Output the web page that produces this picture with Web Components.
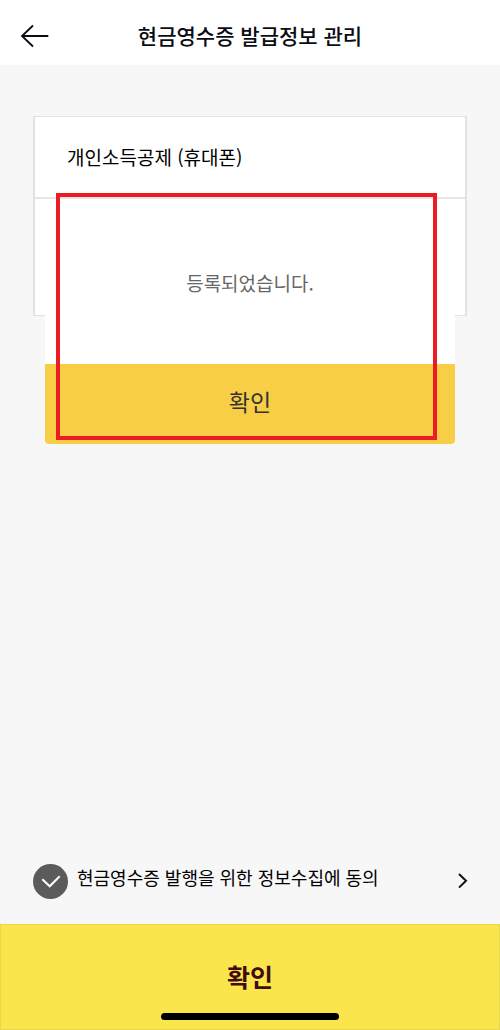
<!DOCTYPE html>
<html lang="ko">
<head>
<meta charset="utf-8">
<meta name="viewport" content="width=device-width, initial-scale=1">
<title>현금영수증 발급정보 관리</title>
<style>
body { margin: 0; background: #f7f7f7; color: #000; font-family: "Noto Sans CJK KR", sans-serif; }
</style>
</head>
<body>
<receipt-page>
  <top-bar slot="header">현금영수증 발급정보 관리</top-bar>
  <info-card>개인소득공제 (휴대폰)</info-card>
  <alert-dialog slot="overlay" action="확인">등록되었습니다.</alert-dialog>
  <focus-frame slot="overlay"></focus-frame>
  <consent-row slot="footer">현금영수증 발행을 위한 정보수집에 동의</consent-row>
  <submit-bar slot="footer">확인</submit-bar>
</receipt-page>
<script>
const define = (name, html, setup) => {
  const template = document.createElement('template');
  template.innerHTML = html;
  customElements.define(name, class extends HTMLElement {
    constructor() {
      super();
      this.attachShadow({ mode: 'open' }).append(template.content.cloneNode(true));
    }
    connectedCallback() { if (setup) setup(this); }
  });
};

define('receipt-page', `
  <style>
    :host { display: flex; flex-direction: column; min-height: 100vh; position: relative; }
    main { flex: 1; padding: 51px 33px; }
  </style>
  <slot name="header"></slot>
  <main><slot></slot></main>
  <slot name="footer"></slot>
  <slot name="overlay"></slot>`);

define('top-bar', `
  <style>
    :host { display: block; background: #fff; color: #0b0b14; }
    header { display: grid; grid-template-columns: 48px 1fr 48px; align-items: center; height: 65px; padding-top: 4px; box-sizing: border-box; }
    button { border: 0; background: none; padding: 2px 0 0 20px; height: 30px; color: inherit; }
    svg { display: block; }
    h1 { margin: 0; font-size: 21px; line-height: 30px; font-weight: 500; text-align: center; }
  </style>
  <header>
    <button type="button" aria-label="뒤로">
      <svg width="30" height="24" viewBox="0 0 30 24" fill="none" stroke="currentColor" stroke-width="1.8"><path d="M13 1.5 2 12l11 10.5M2 12h26.300"/></svg>
    </button>
    <h1><slot></slot></h1>
  </header>`);

define('info-card', `
  <style>
    :host { display: block; background: #fff; border: solid #e2e2e2; border-width: 1px 2px; }
    h2 { margin: 0; padding: 26px 32px; font-size: 19px; line-height: 28px; font-weight: 400; border-bottom: 2px solid #e6e6e6; }
    div { height: 116px; }
  </style>
  <h2><slot></slot></h2>
  <div></div>`);

define('alert-dialog', `
  <style>
    :host { display: block; position: absolute; top: 199px; left: 45px; right: 45px; background: #fff; border-radius: 4px; overflow: hidden; }
    p { margin: 0; padding: 70px 20px 67px; font-size: 19px; line-height: 28px; color: #666; text-align: center; }
    button { display: block; width: 100%; height: 80px; border: 0; padding: 0 0 6px; background: #f8ce46; color: #333; font: 400 23px/30px "Noto Sans CJK KR", sans-serif; }
  </style>
  <div role="alertdialog" aria-labelledby="message">
    <p id="message"><slot></slot></p>
    <button type="button"></button>
  </div>`, el => {
  el.shadowRoot.querySelector('button').textContent = el.getAttribute('action');
});

define('focus-frame', `
  <style>
    :host { display: block; position: absolute; top: 193px; left: 56px; right: 63px; height: 247px; box-sizing: border-box; border: 4px solid #ed1c24; pointer-events: none; }
  </style>`);

define('consent-row', `
  <style>
    :host { display: flex; align-items: flex-start; gap: 9px; padding: 0 31px 25px 33px; }
    .check { display: grid; flex: none; width: 35px; height: 35px; }
    input { grid-area: 1 / 1; appearance: none; margin: 0; border-radius: 50%; background: #aaa; }
    input:checked { background: #5b5b5b; }
    .check svg { grid-area: 1 / 1; pointer-events: none; }
    label { flex: 1; font-size: 18px; line-height: 26px; }
    a { display: block; color: #111; padding-top: 8px; }
    a svg { display: block; }
  </style>
  <span class="check">
    <input type="checkbox" id="agree" checked>
    <svg width="35" height="35" viewBox="0 0 35 35" fill="none" stroke="#fff" stroke-width="2"><path d="m9.300 15.300 7.400 7 10-10"/></svg>
  </span>
  <label for="agree"><slot></slot></label>
  <a href="#terms" aria-label="자세히 보기">
    <svg width="12" height="18" viewBox="0 0 12 18" fill="none" stroke="currentColor" stroke-width="2"><path d="m2 2 7 6.800L2 15.600"/></svg>
  </a>`);

define('submit-bar', `
  <style>
    :host { display: block; position: relative; }
    button { display: block; width: 100%; height: 106px; box-sizing: border-box; border: 1px solid #e8d850; padding: 0 0 2px; background: #fbe54d; color: #3f0d0d; font: 700 25px/36px "Noto Sans CJK KR", sans-serif; }
    i { position: absolute; bottom: 10px; left: 0; right: 0; width: 178px; height: 7px; margin: 0 auto; border-radius: 4px; background: #000; }
  </style>
  <button type="button"><slot></slot></button>
  <i></i>`);
</script>
</body>
</html>
